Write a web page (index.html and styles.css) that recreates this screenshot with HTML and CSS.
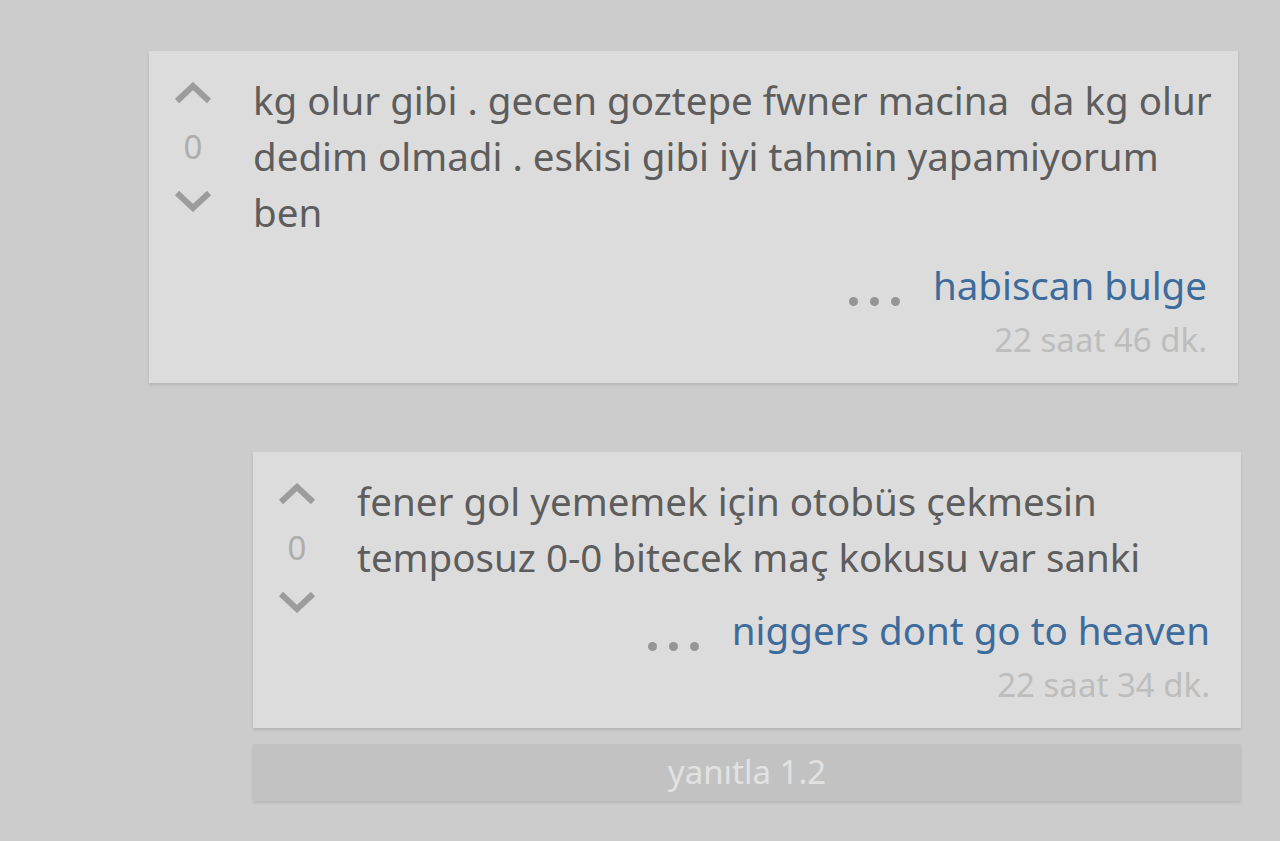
FILE: index.html
```html
<!DOCTYPE html>
<html lang="tr">
<head>
    <meta charset="UTF-8">
    <title>Yorumlar</title>
    <link rel="stylesheet" href="styles.css">
</head>
<body>
<div class="thread">
    <div class="comment top">
        <div class="vote">
            <svg class="arrow" viewBox="0 0 40 22"><polyline points="4,19 20,4 36,19"/></svg>
            <span class="score">0</span>
            <svg class="arrow" viewBox="0 0 40 22"><polyline points="4,3 20,18 36,3"/></svg>
        </div>
        <div class="content">
            <p class="text">kg olur gibi . gecen goztepe fwner macina &nbsp;da kg olur dedim olmadi . eskisi gibi iyi tahmin yapamiyorum ben</p>
            <div class="meta">
                <span class="dots"><i></i><i></i><i></i></span>
                <a class="author" href="#">habiscan bulge</a>
            </div>
            <div class="time">22 saat 46 dk.</div>
        </div>
    </div>

    <div class="replies">
        <div class="comment">
            <div class="vote">
                <svg class="arrow" viewBox="0 0 40 22"><polyline points="4,19 20,4 36,19"/></svg>
                <span class="score">0</span>
                <svg class="arrow" viewBox="0 0 40 22"><polyline points="4,3 20,18 36,3"/></svg>
            </div>
            <div class="content">
                <p class="text">fener gol yememek için otobüs çekmesin temposuz 0-0 bitecek maç kokusu var sanki</p>
                <div class="meta">
                    <span class="dots"><i></i><i></i><i></i></span>
                    <a class="author" href="#">niggers dont go to heaven</a>
                </div>
                <div class="time">22 saat 34 dk.</div>
            </div>
        </div>
        <div class="reply-bar">yanıtla 1.2</div>
    </div>
</div>
</body>
</html>
```

FILE: styles.css
```css
body {
    margin: 0;
    background: #cccccc;
    font-family: "Noto Sans", "Open Sans", sans-serif;
}

.thread {
    padding: 51px 0 40px 0;
}

.comment {
    display: flex;
    background: #dcdcdc;
    box-shadow: 0 2px 3px rgba(0, 0, 0, 0.12);
    padding: 21px 20px 16px 0;
}

.top {
    margin: 0 42px 0 149px;
}

.replies {
    margin: 69px 39px 0 253px;
}

.vote {
    width: 88px;
    flex-shrink: 0;
    margin-right: 16px;
    padding-top: 10px;
    display: flex;
    flex-direction: column;
    align-items: center;
}

.arrow {
    width: 40px;
    height: 22px;
}

.arrow polyline {
    fill: none;
    stroke: #9c9c9c;
    stroke-width: 6;
}

.score {
    font-size: 33px;
    line-height: 86px;
    color: #adadad;
}

.content {
    flex: 1;
}

.text {
    margin: 0;
    font-size: 38.5px;
    line-height: 56px;
    color: #5d5d5d;
}

.meta {
    display: flex;
    justify-content: flex-end;
    align-items: flex-end;
    margin-top: 17px;
    padding-right: 11px;
    line-height: 56px;
}

.dots {
    display: flex;
    gap: 12px;
    margin: 0 33px 7px 0;
}

.dots i {
    width: 9px;
    height: 9px;
    border-radius: 50%;
    background: #959595;
}

.author {
    font-size: 38.5px;
    color: #3d6b9c;
    text-decoration: none;
}

.time {
    text-align: right;
    padding-right: 11px;
    font-size: 33px;
    line-height: 54px;
    color: #bdbdbd;
}

.reply-bar {
    margin-top: 16px;
    height: 57px;
    line-height: 55px;
    background: #c2c2c2;
    box-shadow: 0 2px 3px rgba(0, 0, 0, 0.1);
    text-align: center;
    font-size: 33px;
    color: #e2e2e2;
}
```
